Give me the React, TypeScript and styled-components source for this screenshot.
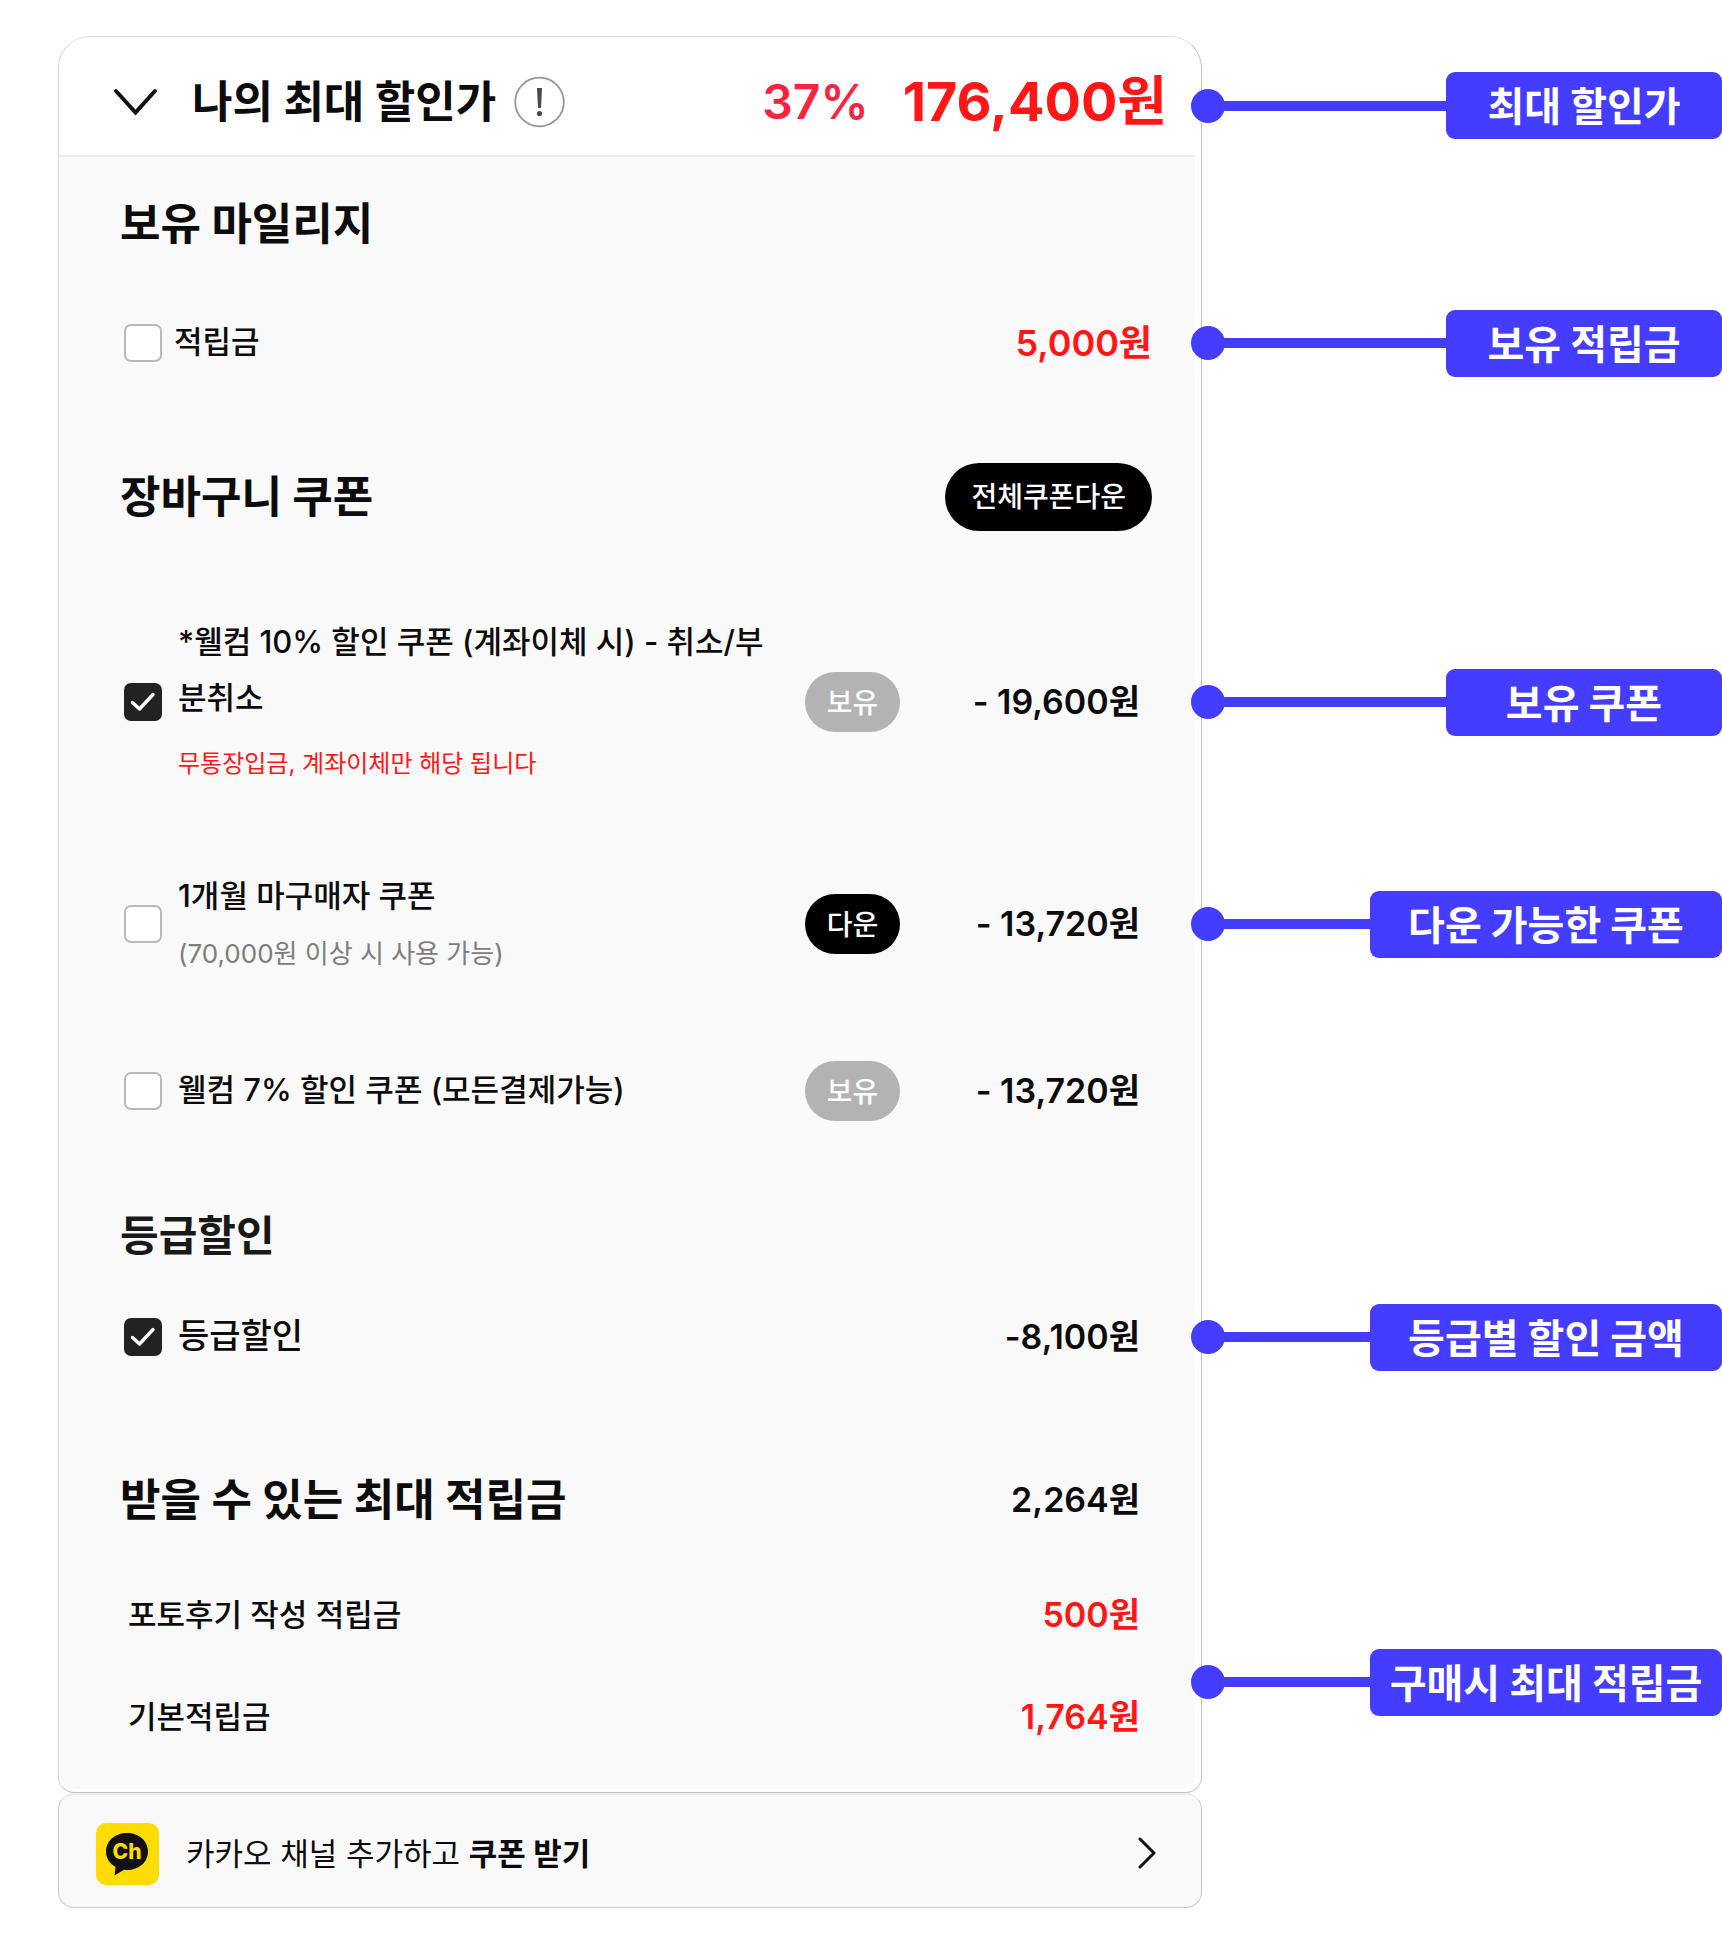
import React from "react";
import styled, { createGlobalStyle } from "styled-components";

const GlobalStyle = createGlobalStyle`
  *, *::before, *::after { box-sizing: border-box; }
  body {
    margin: 0;
    background: #fff;
    color: #0c0c0c;
    font-family: Inter, "Noto Sans CJK KR", sans-serif;
  }
  h1, h2, p, ul { margin: 0; padding: 0; }
  button { font: inherit; border: 0; padding: 0; background: none; cursor: pointer; }
`;

const RED = "#ff1616";
const ACCENT = "#443cff";

const Page = styled.main`
  display: grid;
  grid-template-columns: minmax(0, 1144fr) minmax(0, 520fr);
  grid-template-rows:
    [header] minmax(121px, auto)
    [mileage-title] minmax(134px, auto)
    [mileage] minmax(104px, auto)
    [coupon-title] minmax(204px, auto)
    [owned] minmax(206px, auto)
    [download] minmax(238px, auto)
    [welcome] minmax(96px, auto)
    [grade-title] minmax(150px, auto)
    [grade] minmax(96px, auto)
    [reward-title] minmax(186px, auto)
    [reward] minmax(222px, auto)
    [channel] minmax(115px, auto);
  padding: 36px 0 38px 58px;
`;

const Card = styled.section`
  grid-column: 1;
  grid-row: header / channel;
  display: grid;
  grid-template-rows: subgrid;
  background: #fff;
  border: 1px solid #c2c4c6;
  border-top-color: #dedede;
  border-left-color: #d3d8db;
  border-radius: 32px 32px 16px 16px;
`;

const Header = styled.header`
  display: flex;
  align-items: center;
  padding: 12px 28px 0 52px;
  margin-right: 6px;
  border-bottom: 2px solid #ececec;
`;

const Toggle = styled.button`
  display: flex;
  margin-right: 33px;
`;

const Title = styled.h1`
  font-size: 44px;
  line-height: 56px;
  font-weight: 700;
`;

const Info = styled.button`
  display: flex;
  margin-left: 18px;
`;

const Rate = styled.span`
  margin-left: auto;
  font-size: 48px;
  line-height: 56px;
  font-weight: 600;
  color: #fb2440;
`;

const Price = styled.strong`
  margin-left: 34px;
  font-size: 54px;
  line-height: 56px;
  font-weight: 700;
  color: ${RED};
`;

const Body = styled.div`
  grid-row: 2 / -1;
  display: grid;
  grid-template-rows: subgrid;
  margin: 0 6px 3px 2px;
  background: #f9f9f9;
  border-radius: 0 0 14px 14px;
`;

const SectionHead = styled.div<{ $spaced?: boolean; $inset?: boolean }>`
  display: flex;
  align-items: center;
  justify-content: space-between;
  padding: ${(p) => (p.$spaced ? 44 : 0)}px ${(p) => (p.$inset ? 55 : 43)}px 0 59px;
`;

const SectionTitle = styled.h2<{ $minor?: boolean }>`
  font-size: ${(p) => (p.$minor ? 42 : 44)}px;
  line-height: 56px;
  font-weight: 700;
  color: ${(p) => (p.$minor ? "#191919" : "#0c0c0c")};
`;

const Row = styled.div<{ $inset?: boolean; $tight?: boolean }>`
  display: flex;
  align-items: center;
  gap: ${(p) => (p.$tight ? 12 : 16)}px;
  padding: 0 ${(p) => (p.$inset ? 55 : 43)}px 0 63px;
`;

const CheckWrap = styled.span`
  display: grid;
  flex: none;
  place-items: center;
  > * { grid-area: 1 / 1; }
  > svg { pointer-events: none; }
`;

const Box = styled.input`
  appearance: none;
  width: 38px;
  height: 38px;
  margin: 0;
  border: 2px solid #b9b9b9;
  border-radius: 7px;
  background: #fff;
  &:checked { background: #222; border-color: #222; }
  &:not(:checked) + svg { display: none; }
`;

const RowText = styled.div`
  flex: 1;
  min-width: 0;
  padding-right: 20px;
`;

const RowLabel = styled.label<{ $large?: boolean }>`
  display: block;
  padding-bottom: 2px;
  font-size: ${(p) => (p.$large ? 34 : 31)}px;
  line-height: 56px;
  font-weight: 500;
`;

const Note = styled.p<{ $red?: boolean }>`
  margin-top: ${(p) => (p.$red ? 10 : 2)}px;
  font-size: ${(p) => (p.$red ? 24 : 26)}px;
  line-height: 52px;
  color: ${(p) => (p.$red ? RED : "#7d7d7d")};
`;

const DownloadAll = styled.button`
  height: 68px;
  padding: 0 26px 4px;
  border-radius: 34px;
  background: #000;
  color: #fff;
  font-size: 28px;
  font-weight: 500;
`;

const Pill = styled.button<{ $owned?: boolean }>`
  flex: none;
  width: 95px;
  height: 60px;
  padding-bottom: 3px;
  border-radius: 30px;
  background: ${(p) => (p.$owned ? "#b3b3b3" : "#000")};
  color: #fff;
  font-size: 28px;
  font-weight: 500;
`;

const Amount = styled.span<{ $red?: boolean; $column?: boolean; $large?: boolean }>`
  ${(p) => p.$column && "width: 224px;"}
  flex: none;
  text-align: right;
  font-size: ${(p) => (p.$large ? 36 : 34)}px;
  line-height: 48px;
  font-weight: 600;
  color: ${(p) => (p.$red ? RED : "inherit")};
`;

const RewardList = styled.ul`
  display: flex;
  flex-direction: column;
  gap: 54px;
  padding: 20px 55px 0 67px;
  list-style: none;
`;

const RewardItem = styled.li`
  display: flex;
  justify-content: space-between;
  font-size: 31px;
  line-height: 48px;
  font-weight: 500;
`;

const Channel = styled.a`
  grid-column: 1;
  grid-row: channel;
  display: flex;
  align-items: center;
  gap: 27px;
  padding: 6px 44px 0 37px;
  background: #f9f9f9;
  border: 1px solid #c8c8c8;
  border-top: 2px solid #ebebeb;
  border-radius: 16px;
  color: inherit;
  text-decoration: none;
  font-size: 31px;
  line-height: 48px;
`;

const ChannelText = styled.span`
  flex: 1;
  b { font-weight: 700; }
`;

const CalloutRow = styled.aside<{ $row: string }>`
  grid-column: 2;
  grid-row: ${(p) => p.$row};
  align-self: center;
  display: flex;
  align-items: center;
  margin-left: -11px;
  z-index: 1;
  ${(p) => p.$row === "header" && "padding-top: 18px;"}
`;

const Dot = styled.span`
  width: 34px;
  height: 34px;
  border-radius: 50%;
  background: ${ACCENT};
`;

const Line = styled.span`
  flex: 1;
  height: 10px;
  margin-left: -4px;
  background: ${ACCENT};
`;

const Tag = styled.span<{ $wide?: boolean }>`
  width: ${(p) => (p.$wide ? 352 : 276)}px;
  padding-bottom: 3px;
  border-radius: 9px;
  background: ${ACCENT};
  color: #fff;
  text-align: center;
  white-space: nowrap;
  font-family: "Noto Sans CJK KR", sans-serif;
  font-size: 40px;
  line-height: 64px;
  font-weight: 700;
`;

function Check({ id, checked }: { id: string; checked?: boolean }) {
  return (
    <CheckWrap>
      <Box type="checkbox" id={id} defaultChecked={checked} />
      <svg width="26" height="22" viewBox="0 0 26 22" fill="none">
        <path d="M2.5 11.5 L9.5 18 L23 3.5" stroke="#fff" strokeWidth="3.4" strokeLinecap="round" strokeLinejoin="round" />
      </svg>
    </CheckWrap>
  );
}

function Callout({ row, wide, children }: { row: string; wide?: boolean; children: string }) {
  return (
    <CalloutRow $row={row}>
      <Dot />
      <Line />
      <Tag $wide={wide}>{children}</Tag>
    </CalloutRow>
  );
}

type CouponProps = {
  id: string;
  label: string;
  amount: string;
  checked?: boolean;
  owned?: boolean;
  note?: string;
  warning?: boolean;
};

function Coupon({ id, label, amount, checked, owned, note, warning }: CouponProps) {
  return (
    <Row $inset>
      <Check id={id} checked={checked} />
      <RowText>
        <RowLabel htmlFor={id}>{label}</RowLabel>
        {note && <Note $red={warning}>{note}</Note>}
      </RowText>
      <Pill type="button" $owned={owned}>{owned ? "보유" : "다운"}</Pill>
      <Amount $column>{amount}</Amount>
    </Row>
  );
}

export default function App() {
  return (
    <>
      <GlobalStyle />
      <Page>
        <Card>
          <Header>
            <Toggle type="button" aria-label="접기">
              <svg width="48" height="32" viewBox="0 0 48 32" fill="none">
                <path d="M5 5 L24.5 26.500 L44 5" stroke="#111" strokeWidth="4" strokeLinecap="round" />
              </svg>
            </Toggle>
            <Title>나의 최대 할인가</Title>
            <Info type="button" aria-label="할인 안내">
              <svg width="51" height="52" viewBox="0 0 51 52">
                <circle cx="25.500" cy="26" r="24.300" fill="none" stroke="#979797" strokeWidth="1.800" />
                <path d="M23 12 H28 L27 32 H24 Z" fill="#4a4a4a" />
                <circle cx="25.500" cy="37.500" r="2.600" fill="#4a4a4a" />
              </svg>
            </Info>
            <Rate>37%</Rate>
            <Price>176,400원</Price>
          </Header>
          <Body>
            <SectionHead>
              <SectionTitle>보유 마일리지</SectionTitle>
            </SectionHead>
            <Row $tight>
              <Check id="mileage" />
              <RowText>
                <RowLabel htmlFor="mileage">적립금</RowLabel>
              </RowText>
              <Amount $red $large>5,000원</Amount>
            </Row>
            <SectionHead>
              <SectionTitle>장바구니 쿠폰</SectionTitle>
              <DownloadAll type="button">전체쿠폰다운</DownloadAll>
            </SectionHead>
            <Coupon
              id="welcome10"
              label="*웰컴 10% 할인 쿠폰 (계좌이체 시) - 취소/부분취소"
              amount="- 19,600원"
              note="무통장입금, 계좌이체만 해당 됩니다"
              checked
              owned
              warning
            />
            <Coupon id="month1" label="1개월 마구매자 쿠폰" amount="- 13,720원" note="(70,000원 이상 시 사용 가능)" />
            <Coupon id="welcome7" label="웰컴 7% 할인 쿠폰 (모든결제가능)" amount="- 13,720원" owned />
            <SectionHead $spaced>
              <SectionTitle $minor>등급할인</SectionTitle>
            </SectionHead>
            <Row $inset>
              <Check id="grade" checked />
              <RowText>
                <RowLabel $large htmlFor="grade">등급할인</RowLabel>
              </RowText>
              <Amount>-8,100원</Amount>
            </Row>
            <SectionHead $spaced $inset>
              <SectionTitle>받을 수 있는 최대 적립금</SectionTitle>
              <Amount>2,264원</Amount>
            </SectionHead>
            <RewardList>
              <RewardItem>
                포토후기 작성 적립금<Amount $red>500원</Amount>
              </RewardItem>
              <RewardItem>
                기본적립금<Amount $red>1,764원</Amount>
              </RewardItem>
            </RewardList>
          </Body>
        </Card>

        <Channel href="#channel">
          <svg width="63" height="62" viewBox="0 0 63 62">
            <rect width="63" height="62" rx="10" fill="#fedc00" />
            <path d="M31 10 C43 10 52 18 52 28.500 C52 39 43 47 31 47 L28 46.800 L18.500 52.500 L19.500 44 C13.500 40.500 10 35 10 28.500 C10 18 19 10 31 10 Z" fill="#111" />
            <text x="31" y="36" textAnchor="middle" fontFamily="Inter, sans-serif" fontSize="21" fontWeight="800" fill="#fedc00">Ch</text>
          </svg>
          <ChannelText>
            카카오 채널 추가하고 <b>쿠폰 받기</b>
          </ChannelText>
          <svg width="20" height="34" viewBox="0 0 20 34" fill="none">
            <path d="M3 2 L17 16 L3 30" stroke="#111" strokeWidth="3" strokeLinecap="round" strokeLinejoin="round" />
          </svg>
        </Channel>

        <Callout row="header">최대 할인가</Callout>
        <Callout row="mileage">보유 적립금</Callout>
        <Callout row="owned">보유 쿠폰</Callout>
        <Callout row="download" wide>다운 가능한 쿠폰</Callout>
        <Callout row="grade" wide>등급별 할인 금액</Callout>
        <Callout row="reward" wide>구매시 최대 적립금</Callout>
      </Page>
    </>
  );
}
